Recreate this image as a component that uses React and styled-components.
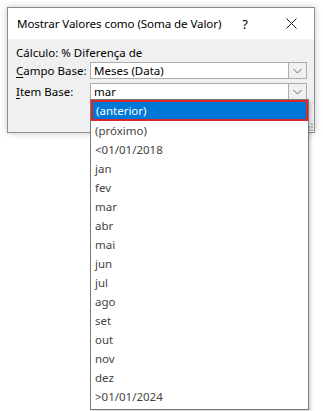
import React from 'react';
import styled, { createGlobalStyle } from 'styled-components';

const GlobalStyle = createGlobalStyle`
    html, body {
        margin: 0;
        padding: 0;
        background: #ffffff;
    }
    body {
        font-family: "Noto Sans", "Open Sans", sans-serif;
        font-size: 12px;
        color: #000;
    }
`;

const Page = styled.div`
    width: 323px;
    height: 411px;
    padding: 7px 0 0 7px;
    box-sizing: border-box;
    position: relative;
    overflow: hidden;
`;

const Dialog = styled.section`
    width: 308px;
    height: 126px;
    box-sizing: border-box;
    border: 1px solid #8c8c8c;
    background: #f0f0f0;
    box-shadow: 0 0 7px rgba(0, 0, 0, 0.22);
    display: flex;
    flex-direction: column;
    position: relative;
`;

const TitleBar = styled.header`
    height: 31px;
    background: #ffffff;
    display: flex;
    align-items: center;
    padding-left: 9px;
`;

const Title = styled.span`
    flex: 1;
    white-space: nowrap;
    font-size: 11.6px;
    letter-spacing: -0.1px;
`;

const TitleButton = styled.span`
    width: 46px;
    flex: none;
    height: 31px;
    display: flex;
    align-items: center;
    justify-content: center;
    font-size: 13px;
`;

const Body = styled.div`
    padding: 6px 0 0 8px;
    display: grid;
    grid-template-columns: 74px 217px;
    grid-auto-rows: min-content;
    row-gap: 4px;
`;

const Calc = styled.div`
    grid-column: 1 / span 2;
    height: 16px;
    line-height: 16px;
    font-size: 11.5px;
    margin-bottom: -3px;
`;

const Label = styled.label`
    font-size: 11.5px;
    line-height: 17px;
    u { text-decoration: underline; text-underline-offset: 2px; }
`;

const Combo = styled.div`
    height: 17px;
    box-sizing: border-box;
    border: 1px solid #acacac;
    background: #fff;
    display: flex;
    align-items: stretch;
    position: relative;
`;

const ComboText = styled.span`
    flex: 1;
    padding-left: 3px;
    line-height: 15px;
    font-size: 11.5px;
`;

const ComboButton = styled.span`
    width: 17px;
    background: #f0f0f0;
    border-left: 1px solid #acacac;
    display: flex;
    align-items: center;
    justify-content: center;
`;

const List = styled.ul`
    position: absolute;
    left: -1px;
    top: 15px;
    width: 219px;
    margin: 0;
    padding: 0 0 3px;
    list-style: none;
    background: #fff;
    border: 1px solid #7a7a7a;
    box-sizing: border-box;
    box-shadow: 2px 2px 3px rgba(0, 0, 0, 0.18);
    z-index: 5;
`;

const Item = styled.li`
    height: 19px;
    line-height: 19px;
    padding-left: 4px;
    font-size: 11.5px;
    color: ${p => (p.$selected ? '#ffffff' : '#444444')};
    background: ${p => (p.$selected ? '#0078d7' : 'transparent')};
    box-sizing: border-box;
    ${p => p.$selected && `
        height: 21px;
        line-height: 17px;
        border: 2px solid #d9262c;
        padding-left: 3px;
    `}
`;

const Grip = styled.svg`
    position: absolute;
    right: 1px;
    bottom: 1px;
`;

const Chevron = () => (
    <svg width="9" height="6" viewBox="0 0 9 6">
        <path d="M0.5 1 L4.5 5 L8.5 1" fill="none" stroke="#6d6d6d" strokeWidth="1" />
    </svg>
);

const items = [
    '(anterior)', '(próximo)', '<01/01/2018', 'jan', 'fev', 'mar', 'abr', 'mai',
    'jun', 'jul', 'ago', 'set', 'out', 'nov', 'dez', '>01/01/2024',
];

export default function App() {
    return (
        <>
            <GlobalStyle />
            <Page>
                <Dialog>
                    <TitleBar>
                        <Title>Mostrar Valores como (Soma de Valor)</Title>
                        <TitleButton>?</TitleButton>
                        <TitleButton>
                            <svg width="11" height="11" viewBox="0 0 11 11">
                                <path d="M0.5 0.5 L10.5 10.5 M10.5 0.5 L0.5 10.5" stroke="#1a1a1a" strokeWidth="1" />
                            </svg>
                        </TitleButton>
                    </TitleBar>
                    <Body>
                        <Calc>Cálculo: % Diferença de</Calc>
                        <Label><u>C</u>ampo Base:</Label>
                        <Combo>
                            <ComboText>Meses (Data)</ComboText>
                            <ComboButton><Chevron /></ComboButton>
                        </Combo>
                        <Label><u>I</u>tem Base:</Label>
                        <Combo>
                            <ComboText>mar</ComboText>
                            <ComboButton><Chevron /></ComboButton>
                            <List>
                                {items.map((it, i) => (
                                    <Item key={it} $selected={i === 0}>{it}</Item>
                                ))}
                            </List>
                        </Combo>
                    </Body>
                    <Grip width="8" height="8" viewBox="0 0 8 8">
                        {[[6, 0], [6, 3], [3, 3], [6, 6], [3, 6], [0, 6]].map(([x, y]) => (
                            <rect key={`${x}-${y}`} x={x} y={y} width="2" height="2" fill="#b8b8b8" />
                        ))}
                    </Grip>
                </Dialog>
            </Page>
        </>
    );
}
